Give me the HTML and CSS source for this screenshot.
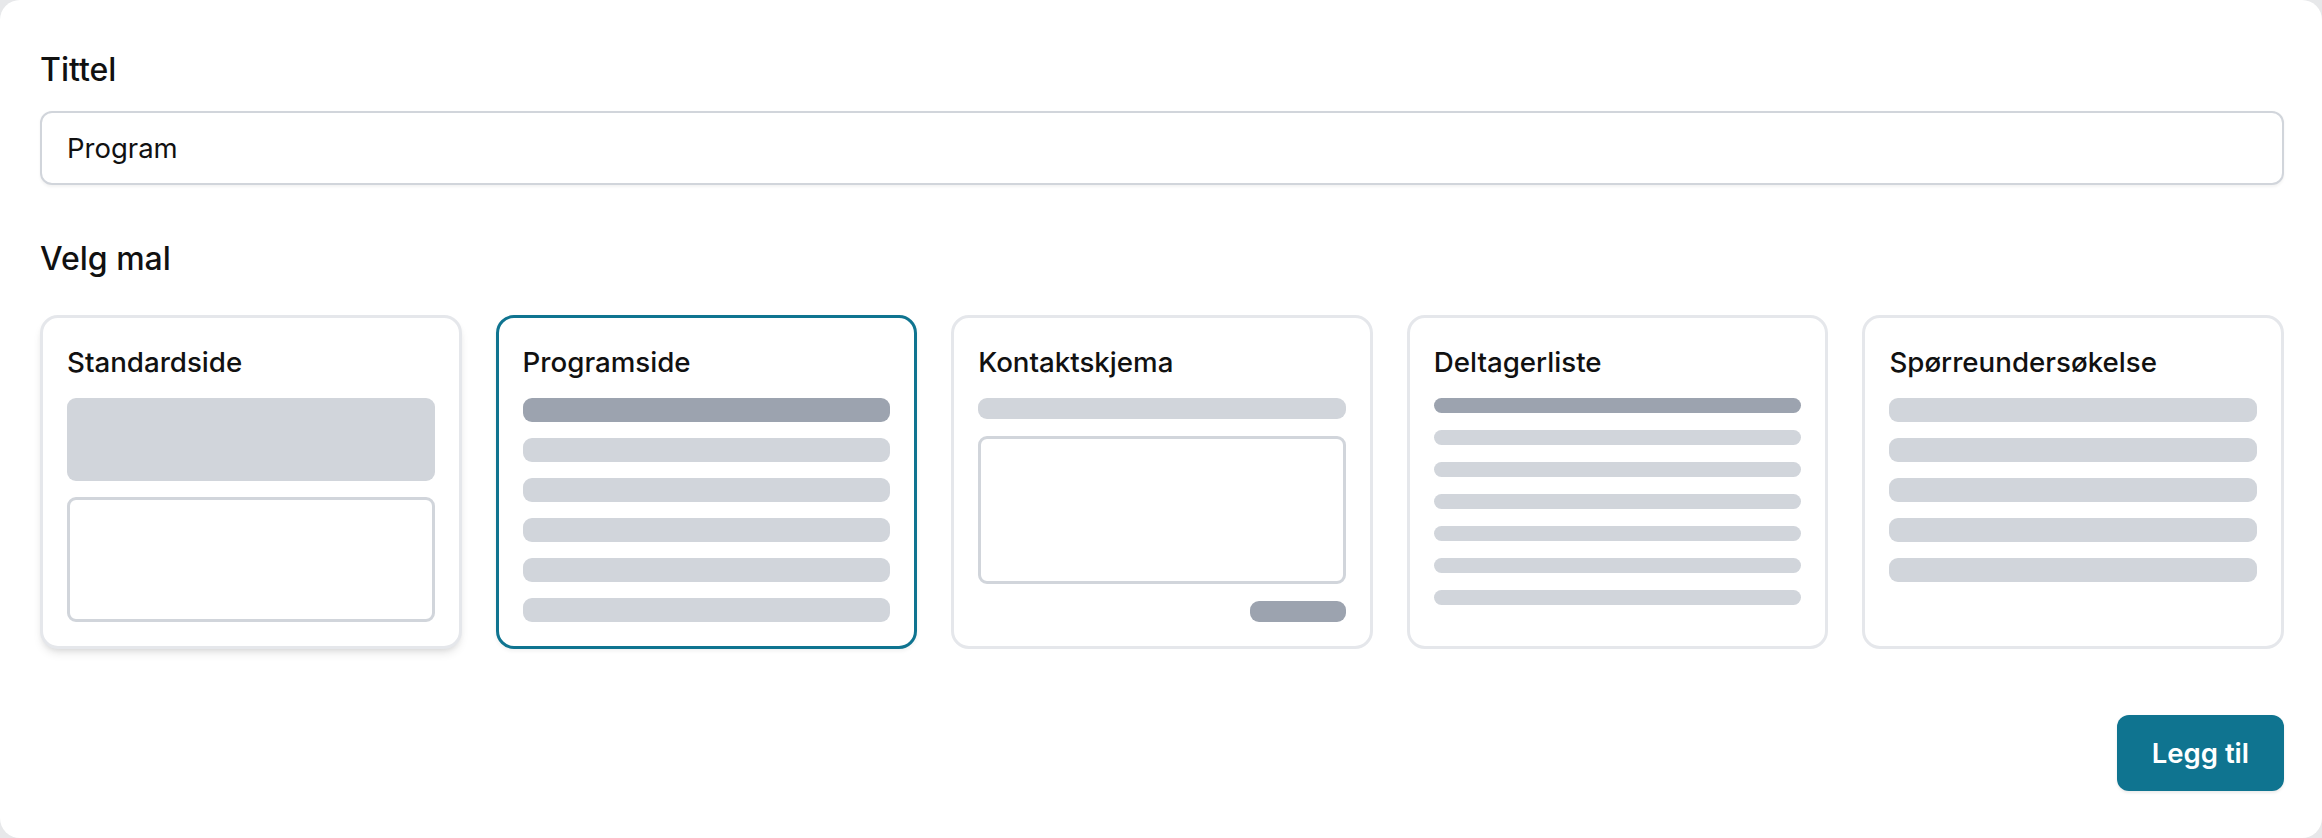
FILE: index.html
```html
<!DOCTYPE html>
<html lang="no">
<head>
<meta charset="utf-8">
<title>Ny side</title>
<link rel="stylesheet" href="styles.css">
</head>
<body>
<main class="panel">
  <label class="field-label" for="title">Tittel</label>
  <input id="title" class="text-input" type="text" value="Program">

  <h2 class="section-label">Velg mal</h2>

  <div class="templates">
    <div class="card card-hover">
      <div class="card-title">Standardside</div>
      <div class="preview preview-standard">
        <div class="hero"></div>
        <div class="outline-box"></div>
      </div>
    </div>

    <div class="card card-selected">
      <div class="card-title">Programside</div>
      <div class="preview preview-program">
        <div class="bar bar-dark"></div>
        <div class="bar"></div>
        <div class="bar"></div>
        <div class="bar"></div>
        <div class="bar"></div>
        <div class="bar"></div>
      </div>
    </div>

    <div class="card">
      <div class="card-title">Kontaktskjema</div>
      <div class="preview preview-contact">
        <div class="bar bar-thin"></div>
        <div class="outline-box outline-tall"></div>
        <div class="submit-bar"></div>
      </div>
    </div>

    <div class="card">
      <div class="card-title">Deltagerliste</div>
      <div class="preview preview-list">
        <div class="pill pill-dark"></div>
        <div class="pill"></div>
        <div class="pill"></div>
        <div class="pill"></div>
        <div class="pill"></div>
        <div class="pill"></div>
        <div class="pill"></div>
      </div>
    </div>

    <div class="card">
      <div class="card-title">Spørreundersøkelse</div>
      <div class="preview preview-program">
        <div class="bar"></div>
        <div class="bar"></div>
        <div class="bar"></div>
        <div class="bar"></div>
        <div class="bar"></div>
      </div>
    </div>
  </div>

  <div class="actions">
    <button class="primary-btn" type="button">Legg til</button>
  </div>
</main>
</body>
</html>
```

FILE: styles.css
```css
* {
  box-sizing: border-box;
}

html, body {
  margin: 0;
  padding: 0;
  height: 100%;
}

body {
  background: #e7e8ea;
  font-family: Inter, "Noto Sans", "Liberation Sans", sans-serif;
  color: #111111;
  overflow: hidden;
}

.panel {
  display: flex;
  flex-direction: column;
  width: 100%;
  height: 100%;
  background: #ffffff;
  border-radius: 20px;
  padding: 49px 38px 0 40px;
}

.field-label,
.section-label {
  display: block;
  margin: 0;
  font-size: 32px;
  line-height: 42px;
  font-weight: 500;
  color: #111111;
}

.field-label {
  margin-bottom: 20px;
}

.text-input {
  display: block;
  width: 100%;
  height: 74px;
  margin: 0;
  padding: 0 25px;
  border: 2px solid #d1d5db;
  border-radius: 12px;
  background: #ffffff;
  box-shadow: 0 1.5px 3px rgba(0, 0, 0, 0.05);
  font-family: inherit;
  font-size: 27.5px;
  color: #111111;
  outline: none;
}

.section-label {
  margin-top: 53px;
}

.templates {
  display: grid;
  grid-template-columns: repeat(5, 1fr);
  gap: 34px;
  margin-top: 35px;
}

.card {
  background: #ffffff;
  border: 3px solid #e5e7eb;
  border-radius: 18px;
  padding: 24px;
}

.card-hover {
  box-shadow: 0 6px 10px -2px rgba(0, 0, 0, 0.1), 0 3px 6px -3px rgba(0, 0, 0, 0.1);
}

.card-selected {
  border-color: #0f7490;
  box-shadow: 0 2px 4px rgba(0, 0, 0, 0.06);
}

.card-title {
  font-size: 27.7px;
  line-height: 40px;
  font-weight: 500;
  color: #111111;
}

.preview {
  display: flex;
  flex-direction: column;
  margin-top: 16px;
}

.preview-standard {
  gap: 16px;
}

.hero {
  height: 83px;
  background: #d1d5db;
  border-radius: 9px;
}

.outline-box {
  height: 125px;
  border: 3px solid #d1d5db;
  border-radius: 9px;
}

.preview-program {
  gap: 16px;
}

.bar {
  height: 24px;
  background: #d1d5db;
  border-radius: 9px;
}

.bar-dark {
  background: #9ca3af;
}

.preview-contact {
  gap: 17px;
}

.bar-thin {
  height: 21px;
}

.outline-tall {
  height: 148px;
}

.submit-bar {
  align-self: flex-end;
  width: 96px;
  height: 21px;
  background: #9ca3af;
  border-radius: 9px;
}

.preview-list {
  gap: 17px;
}

.pill {
  height: 15px;
  background: #d1d5db;
  border-radius: 999px;
}

.pill-dark {
  background: #9ca3af;
}

.actions {
  display: flex;
  justify-content: flex-end;
  margin-top: 66px;
}

.primary-btn {
  height: 76px;
  padding: 0 35px;
  border: none;
  border-radius: 12px;
  background: #0f7490;
  color: #ffffff;
  font-family: inherit;
  font-size: 27.5px;
  font-weight: 600;
  box-shadow: 0 1.5px 3px rgba(0, 0, 0, 0.08);
  cursor: pointer;
}
```
